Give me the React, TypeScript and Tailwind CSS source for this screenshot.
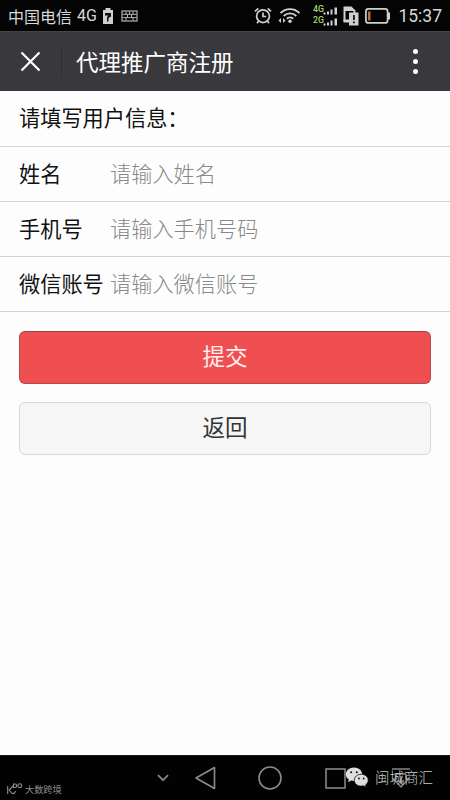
import type { ReactNode } from "react";

const fields = [
  { label: "姓名", placeholder: "请输入姓名" },
  { label: "手机号", placeholder: "请输入手机号码" },
  { label: "微信账号", placeholder: "请输入微信账号" },
];

function StatusBar() {
  return (
    <div className="h-[31px] bg-[#040404] flex items-center justify-between pl-2 pr-2 text-[#d8d8d8]">
      <div className="flex items-center">
        <span className="text-[16px] leading-none whitespace-nowrap">中国电信</span>
        <span className="ml-[5px] pt-px text-[16px] leading-none font-['Roboto','Noto_Sans_CJK_SC',sans-serif]">4G</span>
        {/* Charging battery */}
        <svg className="ml-[5px]" width="12" height="16" viewBox="0 0 12 16">
          <path d="M3.5 0h5v2H11v14H1V2h2.5z" fill="#d0d0d0" />
          <path d="M3 5h6v3.500L6.500 10v3.500H5V9.500L6 7.500H3z" fill="#111" />
        </svg>
        {/* Keyboard */}
        <svg className="ml-[7px]" width="17" height="12" viewBox="0 0 17 12" fill="none" stroke="#b4b4b4">
          <rect x="1" y="1" width="15" height="10" strokeWidth="1.200" />
          <path d="M1.500 4.300h14M1.500 7.600h14" strokeWidth="1" />
          <path d="M5 1.500v2.800M8.500 1.500v2.800M12 1.500v2.800M6.500 4.300v3.300M10.500 4.300v3.300M5 7.600v3M12 7.600v3" strokeWidth="1" />
        </svg>
      </div>

      <div className="flex items-center">
        {/* Alarm */}
        <svg width="18" height="18" viewBox="0 0 18 18" fill="none" stroke="#d0d0d0" strokeWidth="1.7">
          <circle cx="9" cy="9.2" r="6.4" />
          <path d="M9 5.5v4h3.2M1 4.3 4.3 1.4M17 4.3l-3.3-2.9M4.5 14.3l-1.5 2M13.5 14.3l1.500 2" />
        </svg>
        {/* Wi-Fi */}
        <svg className="ml-[6px]" width="23" height="17" viewBox="0 0 23 17" fill="none" stroke="#d0d0d0" strokeWidth="1.9">
          <path d="M2.5 6.2c5.2-5.5 13.800-5.500 19 0M5.700 9c3.500-3.500 9.100-3.500 12.600 0M8.800 11.800c1.800-1.700 4.600-1.700 6.400 0" />
          <circle cx="12" cy="14.300" r="1.700" fill="#d0d0d0" stroke="none" />
          <path d="M3 11v5L0.500 13.500zM5 11v5L7.500 13.500z" fill="#d0d0d0" stroke="none" />
        </svg>
        {/* Dual SIM signal */}
        <svg className="ml-[12px]" width="27" height="24" viewBox="0 0 27 24">
          <g fill="#a9cf72" fontFamily="Roboto, sans-serif" fontSize="8.800" fontWeight="500">
            <text x="0" y="7.500" textLength="11">4G</text>
            <text x="0" y="18.500" textLength="11">2G</text>
          </g>
          <g fill="#d0d0d0">
            <path d="M10.500 8.500h2v2h-2zM14 7.500h2v3h-2zM17.500 5.500h2v5h-2zM21.500 3.500h2.500v7h-2.500z" />
            <path d="M10.500 19.500h2v2h-2zM14 18.500h2v3h-2zM17.500 16.500h2v5h-2zM21.500 14.500h2.500v7h-2.500z" />
          </g>
        </svg>
        {/* SIM alert */}
        <svg className="ml-[3px]" width="16" height="20" viewBox="0 0 16 20">
          <path d="M1.500 15.500V1.500H8L11.500 5V8" fill="none" stroke="#d0d0d0" strokeWidth="2" />
          <path d="M1 1h7l4 4H1zM0.500 13.500H6v3H0.500z" fill="#d0d0d0" />
          <rect x="6" y="6.500" width="9.500" height="13" fill="#d0d0d0" />
          <path d="M10 9h1.800v5H10zM10 15.500h1.800v1.800H10z" fill="#111" />
        </svg>
        {/* Low battery */}
        <svg className="ml-[6px]" width="26" height="16" viewBox="0 0 26 16">
          <rect x="0.900" y="0.900" width="21.700" height="14" rx="2.500" fill="none" stroke="#d0d0d0" strokeWidth="1.700" />
          <path d="M23 4.500h2v7h-2z" fill="#d0d0d0" />
          <rect x="3" y="3.500" width="2.500" height="9" fill="#b86c42" />
        </svg>
        <span className="ml-[7px] pt-[2px] text-[17.500px] leading-none font-['Roboto',sans-serif]">15:37</span>
      </div>
    </div>
  );
}

function TitleBar() {
  return (
    <header className="h-[60px] bg-[#39383d] border-t border-[#454449] flex items-center pl-5 pr-8">
      <svg width="21" height="21" viewBox="0 0 21 21" stroke="#fff" strokeWidth="2.200">
        <path d="M1.500 1.500l18 18M19.500 1.500l-18 18" />
      </svg>
      <div className="ml-5 w-px h-[28px] bg-[#2f2e33]" />
      <h1 className="ml-[14px] flex-1 text-[22.500px] leading-none text-white">代理推广商注册</h1>
      <div className="flex flex-col gap-[5px]">
        <span className="size-[5px] rounded-full bg-white" />
        <span className="size-[5px] rounded-full bg-white" />
        <span className="size-[5px] rounded-full bg-white" />
      </div>
    </header>
  );
}

function Row({ children }: { children: ReactNode }) {
  return (
    <div className="h-[55px] pb-[3px] border-b border-[#d2d2d2] flex items-center pl-[19px] text-[21.200px] leading-none text-[#111] first:h-14">
      {children}
    </div>
  );
}

function NavBar() {
  return (
    <nav className="relative h-[45px] bg-[#020202] border-t border-[#1c1c1c]">
      <div className="h-full flex items-center pl-[157px]">
        <svg width="12" height="8" viewBox="0 0 12 8" fill="none" stroke="#858585" strokeWidth="1.800">
          <path d="M1 1.200l5 5 5-5" />
        </svg>
        <svg className="ml-[25px]" width="22" height="24" viewBox="0 0 22 24" fill="none" stroke="#8c8c8c" strokeWidth="1.600" strokeLinejoin="round">
          <path d="M20.500 1.500v21L2 12z" />
        </svg>
        <svg className="ml-[42px]" width="24" height="24" viewBox="0 0 24 24" fill="none" stroke="#8c8c8c" strokeWidth="1.600">
          <circle cx="12" cy="12" r="11" />
        </svg>
        <svg className="ml-[43px]" width="21" height="21" viewBox="0 0 21 21" fill="none" stroke="#858585" strokeWidth="1.600">
          <rect x="1" y="1" width="19" height="19" />
        </svg>
        <svg className="ml-[46px]" width="18" height="22" viewBox="0 0 18 22" fill="none" stroke="#858585" strokeWidth="1.500">
          <path d="M0 2h18M4 7h10M4 7v5H1.500L9 20l7.500-8H14V7M9 9v7M6 13l3 3 3-3" />
        </svg>
      </div>

      {/* Left brand mark */}
      <div className="absolute left-[7px] top-[27px] flex items-center text-[#8f8f8f]">
        <svg width="16" height="14" viewBox="0 0 16 14" fill="none" stroke="#8f8f8f" strokeWidth="1.100">
          <path d="M0.700 3v8M6 3 2.200 7l3 3.500c2 0.500 3-1 3.300-2.500" />
          <path d="M6.500 1v3.500h1.500a1.700 1.700 0 0 0 0-3.500z" />
          <circle cx="12.800" cy="2.700" r="1.900" />
        </svg>
        <span className="ml-[2px] text-[9.200px] leading-none whitespace-nowrap">大数跨境</span>
      </div>

      {/* WeChat account mark */}
      <div className="absolute left-[345px] top-[11px] flex items-center text-[#c8c8c8]">
        <svg width="24" height="21" viewBox="0 0 24 21">
          <path d="M9 0.500C4.300 0.500 0.800 3.500 0.800 7.300c0 2.100 1.100 3.900 3 5.200L3 15.200l3.200-1.600c1 .3 1.900.4 2.800.4 4.700 0 8.200-3 8.200-6.700S13.700.5 9 .5z" fill="#dedede" />
          <path d="M16.300 7.300c-4 0-7 2.600-7 5.900s3 5.900 7 5.900c.8 0 1.600-.1 2.300-.3l2.600 1.500-.7-2.400c1.700-1.200 2.700-2.800 2.700-4.700 0-3.300-3-5.900-6.900-5.900z" fill="#dedede" stroke="#111" strokeWidth="0.800" />
          <g fill="#111">
            <circle cx="6.200" cy="5.300" r="1" />
            <circle cx="11.800" cy="5.300" r="1" />
            <circle cx="14" cy="11.500" r="0.900" />
            <circle cx="18.700" cy="11.500" r="0.900" />
          </g>
        </svg>
        <span className="ml-[6px] pb-px text-[14.500px] leading-none font-light whitespace-nowrap">闽城商汇</span>
      </div>
    </nav>
  );
}

export default function App() {
  return (
    <div className="w-[450px] h-[800px] overflow-hidden flex flex-col bg-[#fdfdfd] font-['Noto_Sans_CJK_SC',sans-serif]">
      <StatusBar />
      <TitleBar />

      <main className="flex-1">
        <Row>请填写用户信息：</Row>
        {fields.map((field) => (
          <Row key={field.label}>
            <label className="w-[91px] shrink-0 whitespace-nowrap">{field.label}</label>
            <input
              className="flex-1 min-w-0 pb-px bg-transparent outline-none font-light placeholder:text-[#888]"
              placeholder={field.placeholder}
            />
          </Row>
        ))}

        <div className="px-[19px] pt-[19px] flex flex-col gap-[18px]">
          <button className="h-[53px] pb-[5px] rounded-md border border-[#b5484b] border-t-[#99464a] bg-[#f04f52] text-[22.500px] leading-none text-[#fff0f0]">
            提交
          </button>
          <button className="h-[53px] pb-[5px] rounded-md border border-[#d8d8d8] bg-[#f6f6f6] text-[22.500px] leading-none text-[#333]">
            返回
          </button>
        </div>
      </main>

      <NavBar />
    </div>
  );
}
